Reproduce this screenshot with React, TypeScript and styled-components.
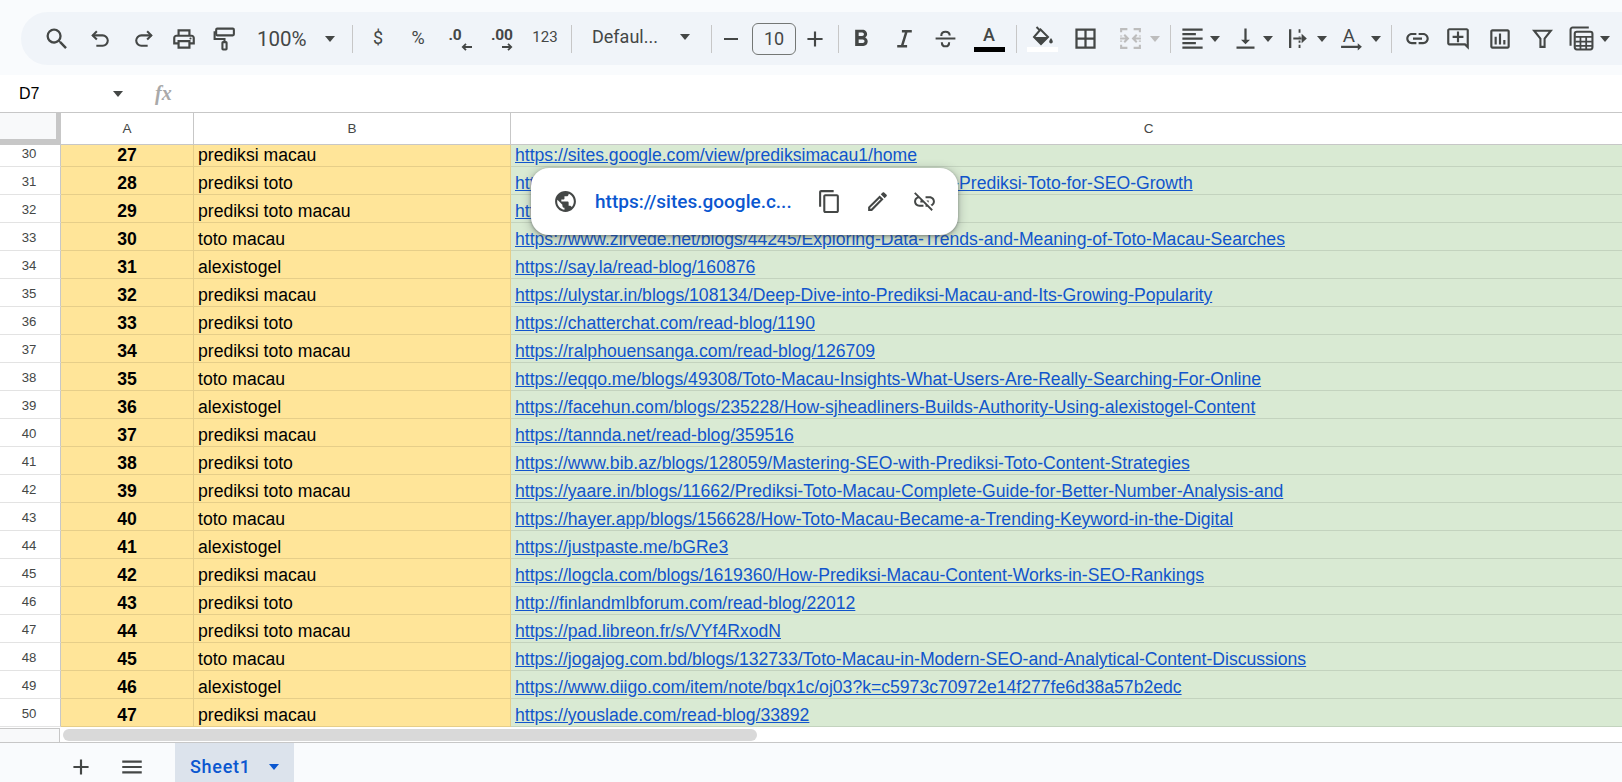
import React from "react";
import styled, { createGlobalStyle } from "styled-components";
import {
  MdSearch, MdOutlineLocalPrintshop, MdFormatBold,
  MdBorderAll, MdFormatAlignLeft, MdVerticalAlignBottom, MdLink, MdOutlineAddComment, MdOutlineInsertChart,
  MdContentCopy, MdOutlineEdit, MdLinkOff, MdPublic, MdAdd, MdRemove, MdMenu,
} from "react-icons/md";

const Global = createGlobalStyle`
  html, body { margin: 0; padding: 0; height: 782px; overflow: hidden; background: #fff; }
  #root { height: 782px; }
`;

const Page = styled.div`
  width: 1622px; height: 782px; display: flex; flex-direction: column; overflow: hidden;
  font-family: "Liberation Sans", Arial, sans-serif; background: #fff;
`;
const TopBand = styled.div`
  height: 75px; flex: none; box-sizing: border-box; padding: 12px 0 10px 21px; background: #f9fbfd;
`;
const Pill = styled.div`
  height: 53px; display: flex; align-items: center; background: #f0f4f9; border-radius: 27px 0 0 27px; overflow: hidden; color: #444746;
`;
const Tool = styled.div<{ $w: number; $ml: number; $muted?: boolean }>`
  flex: none; width: ${p => p.$w}px; margin-left: ${p => p.$ml}px; height: 36px;
  display: flex; align-items: center; justify-content: center; color: ${p => (p.$muted ? "#bdbdbd" : "#444746")};
`;
const Sep = styled.div<{ $ml: number }>`
  flex: none; width: 1px; height: 28px; margin-left: ${p => p.$ml}px; background: #c7c7c7;
`;
const Caret = styled.span<{ $color?: string }>`
  display: block; width: 0; height: 0; border-left: 5.5px solid transparent; border-right: 5.5px solid transparent;
  border-top: 6px solid ${p => p.$color || "#444746"};
`;
const Drop = styled.div<{ $w: number; $ml: number; $pl: number; $pr: number; $lift: number }>`
  flex: none; width: ${p => p.$w}px; margin-left: ${p => p.$ml}px; box-sizing: border-box; padding: 0 ${p => p.$pr}px ${p => p.$lift}px ${p => p.$pl}px;
  display: flex; align-items: center; justify-content: space-between;
`;
const DropLabel = styled.span<{ $size: number }>`
  font: 400 ${p => p.$size}px Roboto, sans-serif; color: #444746; white-space: nowrap;
`;
const NumGlyph = styled.span`
  font: 400 15px Roboto, sans-serif; color: #444746; margin-bottom: 4px;
`;
const SymGlyph = styled.span`
  font: 400 18px Roboto, sans-serif; color: #444746; margin-bottom: 2px;
`;
const Decimal = styled.div`
  display: flex; flex-direction: column; align-items: flex-start; height: 22px;
`;
const DecimalText = styled.span`
  font: 700 15.5px/15px Roboto, sans-serif; color: #444746; letter-spacing: -0.2px;
`;
const DecimalArrow = styled.span<{ $ml: number }>`
  display: block; height: 7px; margin-left: ${p => p.$ml}px; line-height: 0;
`;
const SizeBox = styled.div`
  flex: none; width: 44px; height: 32px; margin-left: 6px; box-sizing: border-box; border: 1px solid #747775; border-radius: 6px;
  display: flex; align-items: center; justify-content: center; font: 400 18px Roboto, sans-serif; color: #444746;
`;
const Swatch = styled.div`
  display: flex; flex-direction: column; align-items: center; width: 32px; height: 27px; justify-content: flex-end;
`;
const SwatchLetter = styled.span`
  font: 500 18px/20px Roboto, sans-serif; color: #444746; margin-bottom: 2px;
`;
const SwatchBar = styled.i<{ $c: string }>`
  display: block; flex: none; width: 31px; height: 5px; background: ${p => p.$c};
`;

const FormulaBar = styled.div`
  height: 37px; flex: none; display: flex; align-items: center; border-bottom: 1px solid #c7c7c7; background: #fff;
`;
const NameBox = styled.div`
  width: 104px; margin-left: 19px; font: 400 16px "Liberation Sans", Arial, sans-serif; color: #000; display: flex; justify-content: space-between; align-items: center;
`;
const Fx = styled.span`
  margin-left: 32px; font: italic 700 20px "Liberation Serif", serif; color: #a9a9a9;
`;
const columns = "61px 133px 317px 1276px";
const HeaderRow = styled.div`
  height: 31px; flex: none; display: grid; grid-template-columns: ${columns}; border-bottom: 1px solid #c7c7c7; background: #fff;
`;
const Corner = styled.div`
  background: #f8f9fa; box-sizing: border-box; border-right: 5px solid #c7c7c7; border-bottom: 5px solid #c7c7c7;
`;
const ColHead = styled.div`
  display: flex; align-items: center; justify-content: center; font: 400 13.5px "Liberation Sans", Arial, sans-serif; color: #444746; border-right: 1px solid #c7c7c7;
`;
const Viewport = styled.div`
  height: 583px; flex: none; overflow: hidden; position: relative;
`;
const Rows = styled.div`
  margin-top: -6px; display: grid; grid-template-columns: ${columns}; grid-auto-rows: 28px;
`;
const RowNum = styled.div`
  box-sizing: border-box; border-right: 1px solid #c7c7c7; border-bottom: 1px solid #e3e3e3;
  display: flex; align-items: center; justify-content: center; font: 400 13.2px "Liberation Sans", Arial, sans-serif; color: #444746; padding: 2px 2px 0 0;
`;
const Cell = styled.div<{ $kind: "a" | "b" | "c" }>`
  box-sizing: border-box; overflow: hidden; white-space: nowrap; font-size: 17.6px; line-height: 24px; padding: 4px 4px 0; color: #000;
  background: ${p => (p.$kind === "c" ? "#d9ead3" : "#ffe599")};
  border-bottom: 1px solid ${p => (p.$kind === "c" ? "#c3d3be" : "#e6ce89")};
  border-right: 1px solid ${p => (p.$kind === "c" ? "#d9ead3" : "#e6ce89")};
  ${p => p.$kind === "a" && "font-weight: 700; text-align: center;"}
`;
const Url = styled.span`
  color: #1155cc; text-decoration: underline;
`;
const Popup = styled.div`
  position: absolute; left: 531px; top: 168px; width: 427px; height: 67px; box-sizing: border-box; background: #fff; border-radius: 18px;
  box-shadow: 0 1px 3px rgba(60,64,67,.5), 0 2px 8px 2px rgba(60,64,67,.25);
  display: flex; align-items: center; padding-left: 22px; color: #444746; z-index: 5;
`;
const PopupLink = styled.span`
  margin-left: 17px; width: 197px; flex: none; font: 500 19px Roboto, sans-serif; color: #0b57d0; white-space: nowrap;
`;
const PopupBtn = styled.div<{ $ml: number }>`
  flex: none; display: flex; margin-left: ${p => p.$ml}px;
`;
const ScrollRow = styled.div`
  height: 14px; flex: none; display: flex; border-bottom: 1px solid #c7c7c7; background: #fff;
`;
const ScrollCorner = styled.div`
  width: 60px; flex: none; box-sizing: border-box; background: #f8f9fa; border-right: 1px solid #c7c7c7; border-top: 1px solid #c7c7c7;
`;
const ScrollTrack = styled.div`
  flex: 1; padding: 1px 0 0 3px;
`;
const Thumb = styled.div`
  width: 694px; height: 12px; background: #d9d9d9; border-radius: 6px;
`;
const TabBar = styled.div`
  flex: 1; background: #f9fbfd; display: flex; align-items: stretch; color: #444746;
`;
const TabIcon = styled.div<{ $ml: number }>`
  display: flex; align-items: center; margin-left: ${p => p.$ml}px; padding-top: 8px;
`;
const SheetTab = styled.div`
  margin-left: 30px; width: 119px; box-sizing: border-box; padding: 8px 15px 0 15px; background: #dce3ec; display: flex; align-items: center; justify-content: space-between;
`;
const TabLabel = styled.span`
  font: 500 18px Roboto, sans-serif; color: #0b57d0; letter-spacing: .7px;
`;

const S = 25;
const stroke = { fill: "none", stroke: "currentColor", strokeWidth: 2 } as const;

const UndoIcon = () => (
  <svg width={S} height={S} viewBox="0 0 24 24" {...stroke}>
    <path d="M8.5 5 4.5 9l4 4" />
    <path d="M4.5 9H14a5 5 0 0 1 0 10H8" />
  </svg>
);
const RedoIcon = () => (
  <svg width={S} height={S} viewBox="0 0 24 24" {...stroke}>
    <path d="M15.5 5l4 4-4 4" />
    <path d="M19.5 9H10a5 5 0 0 0 0 10h6" />
  </svg>
);
const PaintIcon = () => (
  <svg width={S} height={S} viewBox="0 0 24 24" {...stroke}>
    <rect x="4" y="2.5" width="17" height="6.5" rx="1" />
    <path d="M4 6H2.5v6.5H12V15" />
    <rect x="10" y="15.5" width="4" height="7" rx=".6" />
  </svg>
);
const Arrow = ({ dir }: { dir: "l" | "r" }) => (
  <svg width="11" height="8" viewBox="0 0 11 8" fill="none" stroke="currentColor" strokeWidth="1.8">
    {dir === "l" ? <path d="M11 4H2M5 .8 1.8 4 5 7.2" /> : <path d="M0 4h9M6 .8 9.2 4 6 7.2" />}
  </svg>
);
const ItalicIcon = () => (
  <svg width={S} height={S} viewBox="0 0 24 24" fill="none" stroke="currentColor" strokeWidth="2.4">
    <path d="M9.5 5H19M5 19.5h9.5M14 5l-4.500 14.500" />
  </svg>
);
const StrikeIcon = () => (
  <svg width={S} height={S} viewBox="0 0 24 24" fill="none" stroke="currentColor" strokeWidth="2">
    <path d="M2.500 12h19" />
    <path d="M8 9.500V9c0-2.200 1.800-3.500 4-3.500s4 1.300 4 3.500" />
    <path d="M8.500 15.500c0 2.500 1.600 4 3.500 4s3.500-1.500 3.500-4" />
  </svg>
);
const FillIcon = () => (
  <svg width="24" height="21" viewBox="0 0 24 21" fill="none">
    <path d="M6.500 1 10 4.500" stroke="#444746" strokeWidth="2" />
    <path d="M10.500 3.500 18 11l-7 7-7-7z" stroke="#444746" strokeWidth="2" fill="#f0f4f9" />
    <path d="M3.500 11h15L11 18.500z" fill="#444746" />
    <path d="M21 12c-1 1.600-1.800 2.600-1.800 3.700a1.800 1.800 0 0 0 3.600 0c0-1.100-.8-2.100-1.800-3.700z" fill="#444746" />
  </svg>
);
const MergeIcon = () => (
  <svg width={S} height={S} viewBox="0 0 24 24" fill="none" stroke="currentColor" strokeWidth="2">
    <path d="M9 3H3v3M3 9v1M3 14v1M3 18v3h6M15 3h6v3M21 9v1M21 14v1M21 18v3h-6" />
    <path d="M2 12h7M6 8.500 9.500 12 6 15.500M22 12h-7M18 8.500 14.500 12l3.500 3.500" />
  </svg>
);
const WrapIcon = () => (
  <svg width={S} height={S} viewBox="0 0 24 24">
    <path d="M4 3v18" stroke="#444746" strokeWidth="2.200" />
    <path d="M13 3v3.500M13 10v1M13 14v2M13 18v3" stroke="#444746" strokeWidth="1.800" />
    <path d="M7 12h8" stroke="#444746" strokeWidth="2" />
    <path d="M15 7.500 20 12l-5 4.500z" fill="#444746" />
  </svg>
);
const RotateIcon = () => (
  <svg width={S} height={S} viewBox="0 0 24 24">
    <text x="3.500" y="15.500" fontFamily="Roboto, sans-serif" fontSize="18" fill="#444746">A</text>
    <path d="M2 20h17" stroke="#444746" strokeWidth="2" fill="none" />
    <path d="M18 16.500l4 3.500-4 3.500z" fill="#444746" />
  </svg>
);
const FunctionsIcon = () => (
  <svg width={S} height={S} viewBox="0 0 24 24" fill="none" stroke="currentColor" strokeWidth="2">
    <path d="M1.500 19V3.500a2 2 0 0 1 2-2H19" />
    <rect x="5.500" y="5.500" width="17" height="17" rx="2" />
    <path d="M6 10.500h16M6 15h16M6 19h16M11 11v11M16.500 11v11" strokeWidth="1.700" />
  </svg>
);
const FilterIcon = () => (
  <svg width={S} height={S} viewBox="0 0 24 24" {...stroke}>
    <path d="M4 4.500h16l-6 7.500v8h-4v-8z" />
  </svg>
);

const UrlRows: [string, string, string][] = [
  ["27", "prediksi macau", "https://sites.google.com/view/prediksimacau1/home"],
  ["28", "prediksi toto", "https://www.bloggerroad.net/blogs/52071/Understanding-Prediksi-Toto-for-SEO-Growth"],
  ["29", "prediksi toto macau", "https://sites.google.com/view/prediksitotomacau/home"],
  ["30", "toto macau", "https://www.zirvede.net/blogs/44245/Exploring-Data-Trends-and-Meaning-of-Toto-Macau-Searches"],
  ["31", "alexistogel", "https://say.la/read-blog/160876"],
  ["32", "prediksi macau", "https://ulystar.in/blogs/108134/Deep-Dive-into-Prediksi-Macau-and-Its-Growing-Popularity"],
  ["33", "prediksi toto", "https://chatterchat.com/read-blog/1190"],
  ["34", "prediksi toto macau", "https://ralphouensanga.com/read-blog/126709"],
  ["35", "toto macau", "https://eqqo.me/blogs/49308/Toto-Macau-Insights-What-Users-Are-Really-Searching-For-Online"],
  ["36", "alexistogel", "https://facehun.com/blogs/235228/How-sjheadliners-Builds-Authority-Using-alexistogel-Content"],
  ["37", "prediksi macau", "https://tannda.net/read-blog/359516"],
  ["38", "prediksi toto", "https://www.bib.az/blogs/128059/Mastering-SEO-with-Prediksi-Toto-Content-Strategies"],
  ["39", "prediksi toto macau", "https://yaare.in/blogs/11662/Prediksi-Toto-Macau-Complete-Guide-for-Better-Number-Analysis-and"],
  ["40", "toto macau", "https://hayer.app/blogs/156628/How-Toto-Macau-Became-a-Trending-Keyword-in-the-Digital"],
  ["41", "alexistogel", "https://justpaste.me/bGRe3"],
  ["42", "prediksi macau", "https://logcla.com/blogs/1619360/How-Prediksi-Macau-Content-Works-in-SEO-Rankings"],
  ["43", "prediksi toto", "http://finlandmlbforum.com/read-blog/22012"],
  ["44", "prediksi toto macau", "https://pad.libreon.fr/s/VYf4RxodN"],
  ["45", "toto macau", "https://jogajog.com.bd/blogs/132733/Toto-Macau-in-Modern-SEO-and-Analytical-Content-Discussions"],
  ["46", "alexistogel", "https://www.diigo.com/item/note/bqx1c/oj03?k=c5973c70972e14f277fe6d38a57b2edc"],
  ["47", "prediksi macau", "https://youslade.com/read-blog/33892"],
];

export default function App() {
  return (
    <Page>
      <Global />
      <TopBand>
        <Pill>
          <Tool $w={36} $ml={18}><MdSearch size={28} /></Tool>
          <Tool $w={36} $ml={7}><UndoIcon /></Tool>
          <Tool $w={36} $ml={7}><RedoIcon /></Tool>
          <Tool $w={36} $ml={5}><MdOutlineLocalPrintshop size={26} /></Tool>
          <Tool $w={36} $ml={4}><PaintIcon /></Tool>
          <Drop $w={93} $ml={6} $pl={9} $pr={6} $lift={0}><DropLabel $size={20.5}>100%</DropLabel><Caret /></Drop>
          <Sep $ml={11} />
          <Tool $w={36} $ml={7}><SymGlyph>$</SymGlyph></Tool>
          <Tool $w={36} $ml={4}><SymGlyph>%</SymGlyph></Tool>
          <Tool $w={36} $ml={6}><Decimal><DecimalText>.0</DecimalText><DecimalArrow $ml={12}><Arrow dir="l" /></DecimalArrow></Decimal></Tool>
          <Tool $w={36} $ml={6}><Decimal><DecimalText>.00</DecimalText><DecimalArrow $ml={11}><Arrow dir="r" /></DecimalArrow></Decimal></Tool>
          <Tool $w={36} $ml={7}><NumGlyph>123</NumGlyph></Tool>
          <Sep $ml={8} />
          <Drop $w={120} $ml={8} $pl={12} $pr={10} $lift={4}><DropLabel $size={18}>Defaul...</DropLabel><Caret /></Drop>
          <Sep $ml={11} />
          <Tool $w={30} $ml={4}><MdRemove size={24} /></Tool>
          <SizeBox>10</SizeBox>
          <Tool $w={30} $ml={4}><MdAdd size={26} /></Tool>
          <Sep $ml={8} />
          <Tool $w={36} $ml={4}><MdFormatBold size={28} /></Tool>
          <Tool $w={36} $ml={7}><ItalicIcon /></Tool>
          <Tool $w={36} $ml={5}><StrikeIcon /></Tool>
          <Tool $w={36} $ml={8}><Swatch><SwatchLetter>A</SwatchLetter><SwatchBar $c="#000" /></Swatch></Tool>
          <Sep $ml={9} />
          <Tool $w={36} $ml={7}><Swatch><FillIcon /><SwatchBar $c="#fff" /></Swatch></Tool>
          <Tool $w={36} $ml={7}><MdBorderAll size={27} /></Tool>
          <Tool $w={36} $ml={9} $muted><MergeIcon /></Tool>
          <Tool $w={14} $ml={0}><Caret $color="#bdbdbd" /></Tool>
          <Sep $ml={8} />
          <Tool $w={30} $ml={6}><MdFormatAlignLeft size={27} /></Tool>
          <Tool $w={16} $ml={0}><Caret /></Tool>
          <Tool $w={30} $ml={7}><MdVerticalAlignBottom size={27} /></Tool>
          <Tool $w={16} $ml={0}><Caret /></Tool>
          <Tool $w={30} $ml={7}><WrapIcon /></Tool>
          <Tool $w={16} $ml={1}><Caret /></Tool>
          <Tool $w={30} $ml={6}><RotateIcon /></Tool>
          <Tool $w={16} $ml={2}><Caret /></Tool>
          <Sep $ml={7} />
          <Tool $w={36} $ml={7}><MdLink size={27} /></Tool>
          <Tool $w={36} $ml={5}><MdOutlineAddComment size={26} /></Tool>
          <Tool $w={36} $ml={6}><MdOutlineInsertChart size={26} /></Tool>
          <Tool $w={36} $ml={6}><FilterIcon /></Tool>
          <Tool $w={30} $ml={6}><FunctionsIcon /></Tool>
          <Tool $w={16} $ml={1}><Caret /></Tool>
        </Pill>
      </TopBand>
      <FormulaBar>
        <NameBox><span>D7</span><Caret /></NameBox>
        <Fx>fx</Fx>
      </FormulaBar>
      <HeaderRow>
        <Corner />
        <ColHead>A</ColHead>
        <ColHead>B</ColHead>
        <ColHead>C</ColHead>
      </HeaderRow>
      <Viewport>
        <Rows>
          {UrlRows.map(([n, kw, url], i) => (
            <React.Fragment key={n}>
              <RowNum>{30 + i}</RowNum>
              <Cell $kind="a">{n}</Cell>
              <Cell $kind="b">{kw}</Cell>
              <Cell $kind="c"><Url>{url}</Url></Cell>
            </React.Fragment>
          ))}
        </Rows>
      </Viewport>
      <Popup>
        <MdPublic size={25} />
        <PopupLink>https://sites.google.c...</PopupLink>
        <PopupBtn $ml={25}><MdContentCopy size={25} /></PopupBtn>
        <PopupBtn $ml={23}><MdOutlineEdit size={25} /></PopupBtn>
        <PopupBtn $ml={22}><MdLinkOff size={25} /></PopupBtn>
      </Popup>
      <ScrollRow>
        <ScrollCorner />
        <ScrollTrack><Thumb /></ScrollTrack>
      </ScrollRow>
      <TabBar>
        <TabIcon $ml={68}><MdAdd size={26} /></TabIcon>
        <TabIcon $ml={25}><MdMenu size={26} /></TabIcon>
        <SheetTab><TabLabel>Sheet1</TabLabel><Caret $color="#0b57d0" /></SheetTab>
      </TabBar>
    </Page>
  );
}
